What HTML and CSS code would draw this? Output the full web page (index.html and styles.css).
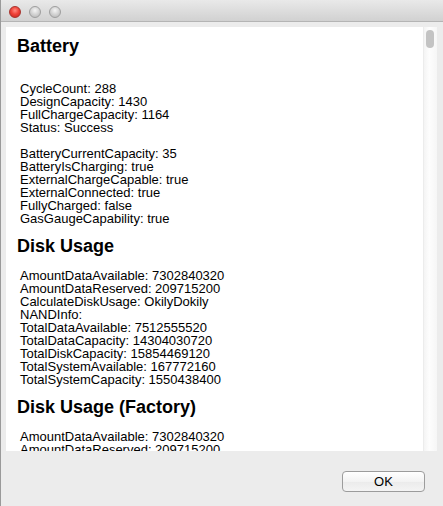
FILE: index.html
```html
<!DOCTYPE html>
<html>
<head>
<meta charset="utf-8">
<link rel="stylesheet" href="styles.css">
</head>
<body>
<div class="window">
  <div class="titlebar">
    <span class="light red"></span>
    <span class="light gray"></span>
    <span class="light gray"></span>
  </div>
  <div class="main">
    <div class="scrollview">
      <div class="content">
        <h2 class="heading">Battery</h2>
        <div class="blank"></div>
        <div class="line">CycleCount: 288</div>
        <div class="line">DesignCapacity: 1430</div>
        <div class="line">FullChargeCapacity: 1164</div>
        <div class="line">Status: Success</div>
        <div class="blank"></div>
        <div class="line">BatteryCurrentCapacity: 35</div>
        <div class="line">BatteryIsCharging: true</div>
        <div class="line">ExternalChargeCapable: true</div>
        <div class="line">ExternalConnected: true</div>
        <div class="line">FullyCharged: false</div>
        <div class="line">GasGaugeCapability: true</div>
        <h2 class="heading">Disk Usage</h2>
        <div class="line">AmountDataAvailable: 7302840320</div>
        <div class="line">AmountDataReserved: 209715200</div>
        <div class="line">CalculateDiskUsage: OkilyDokily</div>
        <div class="line">NANDInfo:</div>
        <div class="line">TotalDataAvailable: 7512555520</div>
        <div class="line">TotalDataCapacity: 14304030720</div>
        <div class="line">TotalDiskCapacity: 15854469120</div>
        <div class="line">TotalSystemAvailable: 167772160</div>
        <div class="line">TotalSystemCapacity: 1550438400</div>
        <h2 class="heading">Disk Usage (Factory)</h2>
        <div class="line">AmountDataAvailable: 7302840320</div>
        <div class="line">AmountDataReserved: 209715200</div>
      </div>
      <div class="scrollbar"><div class="thumb"></div></div>
    </div>
    <div class="footer">
      <button class="ok">OK</button>
    </div>
  </div>
</div>
</body>
</html>
```

FILE: styles.css
```css
html, body {
  margin: 0;
  padding: 0;
  background: #ececec;
}
body {
  width: 443px;
  height: 506px;
  overflow: hidden;
  font-family: "Liberation Sans", Arial, sans-serif;
}
.window {
  width: 443px;
  height: 506px;
  box-sizing: border-box;
  border-left: 1px solid #9a9a9a;
  background: #ececec;
  display: flex;
  flex-direction: column;
}
.titlebar {
  height: 22px;
  flex: none;
  box-sizing: border-box;
  background: linear-gradient(#e9e9e9, #d1d1d1);
  border-bottom: 1px solid #b4b4b4;
  display: flex;
  align-items: center;
  gap: 8px;
  padding: 3px 0 0 8px;
}
.light {
  width: 12px;
  height: 12px;
  border-radius: 50%;
  box-sizing: border-box;
}
.red {
  background: radial-gradient(circle at 50% 35%, #ff8a80 0%, #f0443a 45%, #c4231b 100%);
  border: 1px solid #a8322c;
}
.gray {
  background: radial-gradient(circle at 50% 35%, #f4f4f4 0%, #cfcfcf 55%, #b3b3b3 100%);
  border: 1px solid #9e9e9e;
}
.main {
  flex: 1;
  display: flex;
  flex-direction: column;
  padding: 5px 6px 0 5px;
}
.scrollview {
  height: 424px;
  flex: none;
  display: flex;
  background: #fff;
}
.content {
  flex: 1;
  overflow: hidden;
  padding: 8px 0 0 11px;
  color: #000;
}
.heading {
  margin: 10px 0 12px 0;
  font-size: 18px;
  line-height: 22px;
  font-weight: bold;
}
.heading:first-child {
  margin-top: 0;
}
.line {
  font-size: 13px;
  line-height: 13px;
  margin-left: 3px;
  white-space: nowrap;
}
.blank {
  height: 13px;
}
.scrollbar {
  width: 14px;
  flex: none;
  box-sizing: border-box;
  border-left: 1px solid #ececec;
  background: linear-gradient(90deg, #f4f4f4, #fdfdfd 40%, #f6f6f6);
  padding: 3px 0 0 2px;
}
.thumb {
  width: 8px;
  height: 18px;
  border-radius: 4px;
  background: #c3c3c3;
}
.footer {
  display: flex;
  justify-content: flex-end;
  padding: 20px 12px 0 0;
}
.ok {
  width: 83px;
  height: 21px;
  box-sizing: border-box;
  border: 1px solid #9c9c9c;
  border-radius: 4px;
  background: linear-gradient(#ffffff, #f3f3f3 50%, #ebebeb 51%, #f4f4f4);
  font-family: "Liberation Sans", Arial, sans-serif;
  font-size: 13px;
  color: #000;
  padding: 0;
  line-height: 19px;
}
```
